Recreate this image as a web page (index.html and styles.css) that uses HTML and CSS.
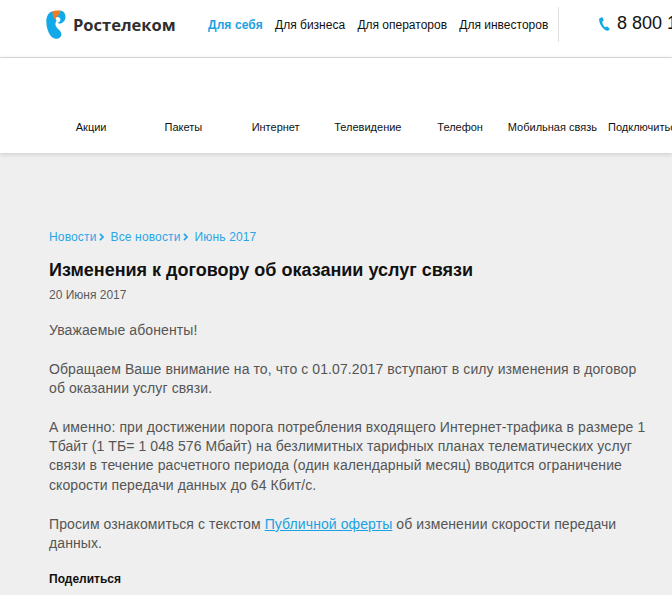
FILE: index.html
```html
<!DOCTYPE html>
<html lang="ru">
<head>
<meta charset="utf-8">
<title>Изменения к договору</title>
<link rel="stylesheet" href="styles.css">
</head>
<body>
<header class="top">
  <a class="logo">
    <svg class="logo-mark" width="20" height="30" viewBox="0 0 20 30">
      <path fill="#12a9e8" d="M6.5 1.2C2.6 2.3.3 6 .3 11.5c0 7.6 3.8 17.3 9.7 17.3 3.3 0 5.400-2 5.400-4.500 0-2.300-1.500-3.700-3-5.100-1.700-1.600-3-3.200-3-5.300 0-1.300.4-2.300 1.200-3.200L6.500 1.200z"/>
      <path fill="#f47a20" d="M6.500 1.200C8 .6 10 .4 12.500.4c.8 0 1.500 0 2.100.1-.3 3.400-1.800 5.200-4 6.700-.9.7-1.500 1.300-2 2.100-.9-1.700-2.500-5.300-2.100-8.100z"/>
      <path fill="#12a9e8" d="M14.600.5c3 .5 4.900 2.900 4.900 6.200 0 4-2.800 6.700-6.200 6.800-.7 0-1.600-.2-2.200-.5 1.900-.3 3.300-1.600 3.300-3.500 0-1.600-1.200-2.600-2.700-2.600-.6 0-1.200.1-1.700.4 2-1.500 3.600-3.200 4.600-6.800z"/>
    </svg>
    <span class="logo-text">Ростелеком</span>
  </a>
  <nav class="segments">
    <a class="segment is-active">Для себя</a>
    <a class="segment">Для бизнеса</a>
    <a class="segment">Для операторов</a>
    <a class="segment">Для инвесторов</a>
  </nav>
  <div class="phone">
    <svg class="phone-icon" width="11" height="14" viewBox="0 0 11 14">
      <path fill="#12a9e8" d="M1.100.9 3 .2c.3-.1.500 0 .6.300l1 2.600c.1.300 0 .5-.2.700L3.300 4.600c-.1.100-.1.300-.1.500.3 1.700 1.300 3.700 2.700 5 .2.100.3.100.5.100l1.500-.6c.3-.1.500 0 .7.200l2 1.900c.2.200.2.500 0 .7l-1.300 1c-.6.400-1.300.5-2 .2C3.500 11.800.7 7.700.1 3.100 0 2.100.4 1.300 1.100.9z"/>
    </svg>
    <span>8 800 100 0 800</span>
  </div>
</header>
<nav class="catalog">
  <a class="catalog-item">Акции</a>
  <a class="catalog-item">Пакеты</a>
  <a class="catalog-item">Интернет</a>
  <a class="catalog-item">Телевидение</a>
  <a class="catalog-item">Телефон</a>
  <a class="catalog-item">Мобильная связь</a>
  <a class="catalog-item catalog-last">Подключиться</a>
</nav>
<main class="content">
  <div class="crumbs">
    <a>Новости</a><svg class="chev" width="5" height="8" viewBox="0 0 5 8"><path d="M1 .8 4 4 1 7.200" fill="none" stroke="#2aa6e8" stroke-width="1.800"/></svg>
    <a>Все новости</a><svg class="chev" width="5" height="8" viewBox="0 0 5 8"><path d="M1 .8 4 4 1 7.200" fill="none" stroke="#2aa6e8" stroke-width="1.800"/></svg>
    <a>Июнь 2017</a>
  </div>
  <h1 class="title">Изменения к договору об оказании услуг связи</h1>
  <div class="date">20 Июня 2017</div>
  <div class="article">
    <p class="greeting">Уважаемые абоненты!</p>
    <p>Обращаем Ваше внимание на то, что с 01.07.2017 вступают в силу изменения в договор об оказании услуг связи.</p>
    <p>А именно: при достижении порога потребления входящего Интернет-трафика в размере 1 Тбайт (1 ТБ= 1 048 576 Мбайт) на безлимитных тарифных планах телематических услуг связи в течение расчетного периода (один календарный месяц) вводится ограничение скорости передачи данных до 64 Кбит/с.</p>
    <p>Просим ознакомиться с текстом <a class="link">Публичной оферты</a> об изменении скорости передачи данных.</p>
  </div>
  <div class="share">Поделиться</div>
</main>
</body>
</html>
```
FILE: styles.css
```css
html, body {
  margin: 0;
  padding: 0;
  height: 595px;
  overflow: hidden;
  background: #efefef;
  font-family: "Liberation Sans", Arial, sans-serif;
  color: #555;
}
.top {
  display: flex;
  align-items: center;
  height: 49px;
  padding: 0 0 8px 46px;
  background: #fff;
  border-bottom: 1px solid #dedede;
  white-space: nowrap;
  overflow: hidden;
}
.logo {
  display: flex;
  align-items: center;
  gap: 7px;
  width: 162px;
  flex: none;
}
.logo-text {
  font-family: "Open Sans", sans-serif;
  font-weight: 700;
  font-size: 16.500px;
  color: #2f2f2f;
}
.segments {
  display: flex;
  gap: 12.300px;
  font-size: 12px;
  color: #111;
  width: 351px;
  height: 35px;
  align-items: center;
  border-right: 1px solid #e0e0e0;
  flex: none;
  box-sizing: border-box;
}
.segment { display: block; }
.is-active { color: #1ba1e2; font-weight: 700; letter-spacing: .1px; }
.phone {
  display: flex;
  align-items: center;
  gap: 7px;
  margin-left: 40px;
  padding-bottom: 2px;
  font-size: 18px;
  color: #111;
  flex: none;
}
.catalog {
  display: flex;
  height: 95px;
  padding: 0 0 0 45px;
  align-items: flex-end;
  background: #fff;
  box-shadow: 0 1px 5px rgba(0, 0, 0, .16);
  font-size: 11px;
  color: #111;
  white-space: nowrap;
  overflow: hidden;
  position: relative;
}
.catalog-item {
  flex: none;
  width: 92.250px;
  text-align: center;
  padding-bottom: 20px;
}
.catalog-last { width: auto; margin-left: 9.500px; }
.content {
  padding: 76px 24px 0 49px;
}
.crumbs {
  font-size: 12px;
  line-height: 16px;
  letter-spacing: .15px;
  color: #2aa6e8;
}
.chev {
  margin: 0 3.500px 0 2px;
}
.title {
  margin: 13px 0 0;
  font-size: 18px;
  line-height: 24px;
  font-weight: 700;
  color: #111;
}
.date {
  margin-top: 5px;
  font-size: 12px;
  line-height: 16px;
  color: #5b5b5b;
}
.article {
  margin-top: 18px;
  font-size: 14px;
  line-height: 19.200px;
  letter-spacing: .09px;
}
.article p { margin: 0 0 20px; }
.article .greeting { margin-bottom: 19.300px; }
.article p:last-child { margin-bottom: 0; }
.link {
  color: #1ba1e2;
  text-decoration: underline;
}
.share {
  margin-top: 18px;
  font-size: 12px;
  line-height: 16px;
  font-weight: 700;
  color: #111;
}
```
